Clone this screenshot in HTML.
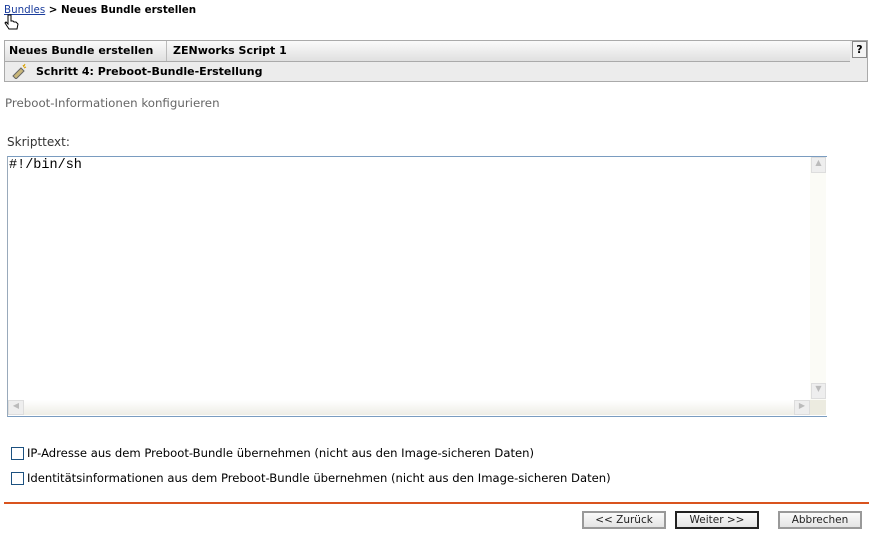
<!DOCTYPE html>
<html><head><style>
body{margin:0;width:877px;height:543px;background:#fff;font-family:"DejaVu Sans","Liberation Sans",sans-serif;font-size:12px;color:#000;position:relative;overflow:hidden}
.a{position:absolute}
.btn{position:absolute;top:511px;height:14px;width:80px;border:2px solid #999;background:linear-gradient(#fafafa,#e4e4e4);font-size:10.5px;text-align:center;line-height:14px;color:#222}
</style></head><body>
<div class="a" style="left:4px;top:4px;font-size:10.3px;font-weight:bold"><span style="color:#1a3c9c;text-decoration:underline;font-weight:normal">Bundles</span> &gt; Neues Bundle erstellen</div>
<svg class="a" style="left:4px;top:14px" width="16" height="20"><path d="M4 1v9l-2-2-1 1 4 6h8l1-5-2-2-2 0-1-1-2 0V1z" fill="#fff" stroke="#000" stroke-width="1"/></svg>
<div class="a" style="left:4px;top:40px;width:862px;height:40px;border:1px solid #aaa;background:#ececec"></div>
<div class="a" style="left:5px;top:41px;width:845px;height:20px;background:linear-gradient(#fafafa,#e0e0e0);border-bottom:1px solid #aaa"></div>
<div class="a" style="left:166px;top:41px;width:1px;height:20px;background:#bbb"></div>
<div class="a" style="left:9px;top:44px;font-weight:bold;font-size:11px">Neues Bundle erstellen</div>
<div class="a" style="left:173px;top:44px;font-weight:bold;font-size:11px">ZENworks Script 1</div>
<div class="a" style="left:852px;top:41px;width:13px;height:15px;border:1px solid #888;background:#f4f4f4;font-weight:bold;font-size:11px;text-align:center;line-height:15px">?</div>
<svg class="a" style="left:11px;top:63px" width="18" height="16"><path d="M2 13l8-8 3 3-8 8z" fill="#c9b77a" stroke="#666"/><path d="M12 2l1 2M15 4l-2 1M14 1l-1 2" stroke="#d9a000"/></svg>
<div class="a" style="left:36px;top:65px;font-weight:bold;font-size:11px">Schritt 4: Preboot-Bundle-Erstellung</div>
<div class="a" style="left:5px;top:96px;font-size:11.8px;color:#666">Preboot-Informationen konfigurieren</div>
<div class="a" style="left:7px;top:135px;font-size:12px;color:#333">Skripttext:</div>
<div class="a" style="left:7px;top:156px;width:819px;height:259px;border-top:1px solid #7a9cc0;border-left:1px solid #9ab;border-bottom:1px solid #7a9cc0;background:#fff"></div>
<div class="a" style="left:9px;top:158px;font-family:'Liberation Mono',monospace;font-size:13.5px">#!/bin/sh</div>
<div class="a" style="left:810px;top:157px;width:16px;height:243px;background:#fbfbf6"></div>
<div class="a" style="left:811px;top:157px;width:13px;height:14px;border:1px solid #ddd;background:#eee;color:#bbb;font-size:8px;text-align:center">▲</div>
<div class="a" style="left:811px;top:383px;width:13px;height:14px;border:1px solid #ddd;background:#eee;color:#bbb;font-size:8px;text-align:center">▼</div>
<div class="a" style="left:8px;top:400px;width:802px;height:15px;background:linear-gradient(#fff,#eeede6)"></div>
<div class="a" style="left:8px;top:400px;width:14px;height:13px;border:1px solid #ddd;background:#eee;color:#bbb;font-size:8px;text-align:center">◀</div>
<div class="a" style="left:794px;top:400px;width:14px;height:13px;border:1px solid #ddd;background:#eee;color:#bbb;font-size:8px;text-align:center">▶</div>
<div class="a" style="left:810px;top:400px;width:16px;height:15px;background:#ecebe0"></div>
<div class="a" style="left:11px;top:447px;width:11px;height:11px;border:1px solid #1c5180;background:#fff"></div>
<div class="a" style="left:27px;top:446px;font-size:11.6px">IP-Adresse aus dem Preboot-Bundle übernehmen (nicht aus den Image-sicheren Daten)</div>
<div class="a" style="left:11px;top:472px;width:11px;height:11px;border:1px solid #1c5180;background:#fff"></div>
<div class="a" style="left:27px;top:471px;font-size:11.6px">Identitätsinformationen aus dem Preboot-Bundle übernehmen (nicht aus den Image-sicheren Daten)</div>
<div class="a" style="left:4px;top:502px;width:865px;height:2px;background:#d9531e"></div>
<div class="btn" style="left:582px">&lt;&lt; Zurück</div>
<div class="btn" style="left:675px;border-color:#222">Weiter &gt;&gt;</div>
<div class="btn" style="left:778px">Abbrechen</div>
</body></html>
